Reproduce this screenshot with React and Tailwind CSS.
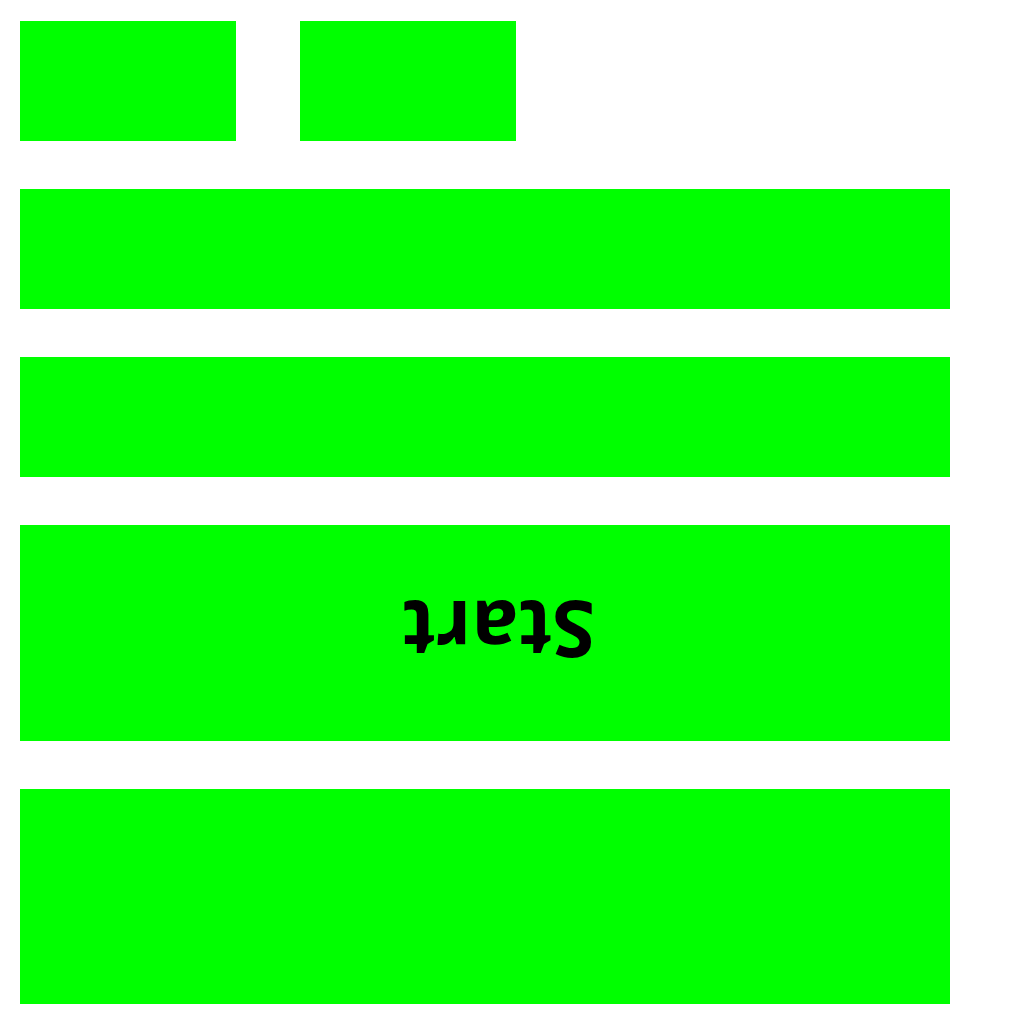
import React from 'react';

const App = () => {
  return (
    <div className="min-h-screen bg-white pt-[21px] pl-5 font-['Open_Sans',sans-serif]">
      <div className="flex flex-col gap-12 w-[930px]">
        {/* Top pair */}
        <div className="flex gap-16">
          <div className="w-[216px] h-[120px] bg-[#00ff00]" />
          <div className="w-[216px] h-[120px] bg-[#00ff00]" />
        </div>

        <div className="h-[120px] bg-[#00ff00]" />
        <div className="h-[120px] bg-[#00ff00]" />

        {/* Start button, flipped */}
        <div className="h-[216px] bg-[#00ff00] flex items-center justify-center pl-7 pb-1">
          <span className="rotate-180 text-[78px] font-bold text-black leading-none">Start</span>
        </div>

        <div className="h-[215px] bg-[#00ff00]" />
      </div>
    </div>
  );
};

export default App;
